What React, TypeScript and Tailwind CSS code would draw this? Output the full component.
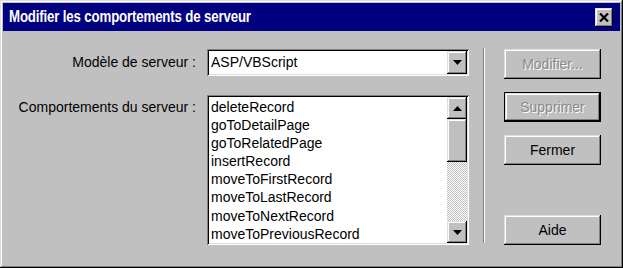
import React from "react";

const raised =
  "shadow-[inset_-1px_-1px_0_#000,inset_1px_1px_0_#dfdfdf,inset_-2px_-2px_0_#808080,inset_2px_2px_0_#fff]";
const sunken =
  "shadow-[inset_1px_1px_0_#808080,inset_-1px_-1px_0_#fff,inset_2px_2px_0_#000,inset_-2px_-2px_0_#dfdfdf]";

const items = [
  "deleteRecord",
  "goToDetailPage",
  "goToRelatedPage",
  "insertRecord",
  "moveToFirstRecord",
  "moveToLastRecord",
  "moveToNextRecord",
  "moveToPreviousRecord",
];

function Arrow({ up }: { up?: boolean }) {
  return (
    <svg width="9" height="5" viewBox="0 0 9 5">
      {up ? <path d="M4.5 0 L9 5 L0 5 Z" fill="#000" /> : <path d="M0 0 L9 0 L4.5 5 Z" fill="#000" />}
    </svg>
  );
}

function ScrollBtn({ up, className = "" }: { up?: boolean; className?: string }) {
  return (
    <div className={`w-[20px] h-[22px] bg-[#c0c0c0] flex items-center justify-center ${raised} ${className}`}>
      <Arrow up={up} />
    </div>
  );
}

function Btn({ label, disabled, isDefault, className = "" }: { label: string; disabled?: boolean; isDefault?: boolean; className?: string }) {
  return (
    <div
      className={`w-[97px] h-[30px] bg-[#c0c0c0] flex items-center justify-center text-[14px] ${
        isDefault
          ? "shadow-[inset_0_0_0_1px_#000,inset_-2px_-2px_0_#000,inset_2px_2px_0_#dfdfdf,inset_-3px_-3px_0_#808080,inset_3px_3px_0_#fff]"
          : raised
      } ${disabled ? "text-[#8a8a8a] [text-shadow:1px_1px_0_#fff]" : "text-black"} ${className}`}
    >
      {label}
    </div>
  );
}

export default function App() {
  return (
    <div
      className={`w-[623px] h-[268px] bg-[#c0c0c0] p-[3px] flex flex-col ${raised}`}
      style={{ fontFamily: '"Liberation Sans", Arial, sans-serif' }}
    >
      {/* barre de titre */}
      <div className="h-[28px] bg-[#000080] flex items-center justify-between pl-[6px] pr-[7px] overflow-hidden">
        <span className="text-white font-bold text-[17px] tracking-[-0.2px] origin-left scale-x-[0.78] whitespace-nowrap">
          Modifier les comportements de serveur
        </span>
        <div className={`w-[18px] h-[19px] bg-[#c0c0c0] flex items-center justify-center ${raised}`}>
          <svg width="10" height="9" viewBox="0 0 10 9">
            <path d="M1 0.5 L9 8.5 M9 0.5 L1 8.5" stroke="#000" strokeWidth="2.2" />
          </svg>
        </div>
      </div>

      <div className="flex items-start pt-[18px] text-[14px] text-black">
        {/* formulaire */}
        <div className="flex flex-col gap-[19px]">
          <div className="flex items-center">
            <div className="w-[193px] text-right whitespace-nowrap">Modèle de serveur :</div>
            <div className={`ml-[11px] w-[262px] h-[27px] bg-white flex items-center justify-between pl-[4px] pr-[2px] ${sunken}`}>
              <span>ASP/VBScript</span>
              <div className={`w-[20px] h-[23px] bg-[#c0c0c0] flex items-center justify-center ${raised}`}>
                <Arrow />
              </div>
            </div>
          </div>
          <div className="flex items-start">
            <div className="w-[193px] text-right pt-[2px] whitespace-nowrap">Comportements du serveur :</div>
            <div className={`ml-[11px] w-[262px] h-[150px] bg-white flex p-[2px] ${sunken}`}>
              <div className="flex-1 pl-[2px] pt-[1px] leading-[18.1px] whitespace-nowrap overflow-hidden">
                {items.map((it) => (
                  <div key={it}>{it}</div>
                ))}
              </div>
              <div className="w-[20px] flex flex-col">
                <ScrollBtn up />
                <div className={`h-[43px] bg-[#c0c0c0] ${raised}`} />
                <div className="flex-1 bg-[repeating-conic-gradient(#c0c0c0_0%_25%,#fff_0%_50%)] bg-[length:2px_2px]" />
                <ScrollBtn />
              </div>
            </div>
          </div>
        </div>

        {/* séparateur */}
        <div className="ml-[14px] -mt-[1px] h-[195px] flex">
          <div className="w-[1px] bg-[#808080]" />
          <div className="w-[1px] bg-white" />
        </div>

        {/* boutons */}
        <div className="ml-[19px] flex flex-col">
          <Btn label="Modifier..." disabled />
          <Btn label="Supprimer" disabled isDefault className="mt-[13px]" />
          <Btn label="Fermer" className="mt-[13px]" />
          <Btn label="Aide" className="mt-[50px]" />
        </div>
      </div>
    </div>
  );
}
